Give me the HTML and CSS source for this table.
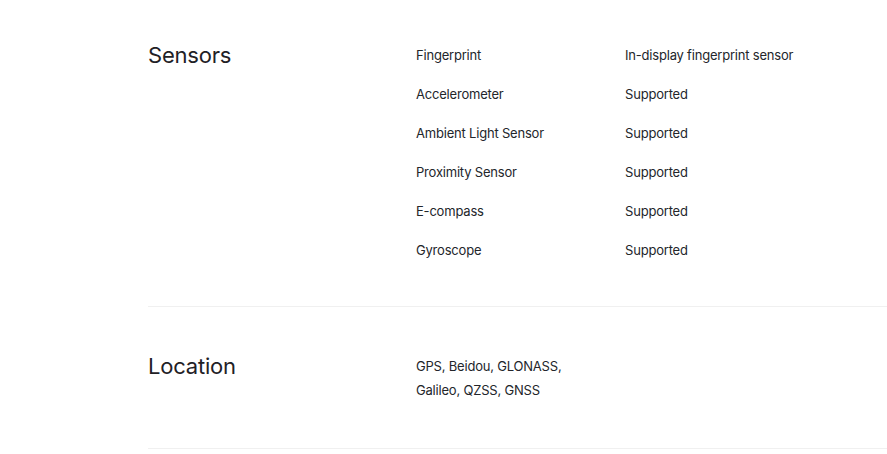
FILE: index.html
```html
<!DOCTYPE html>
<html>
<head>
<meta charset="utf-8">
<link rel="stylesheet" href="styles.css">
</head>
<body>
<div class="page">
  <section class="spec spec-first">
    <h2 class="spec-title">Sensors</h2>
    <div class="spec-rows">
      <div class="row"><div class="label">Fingerprint</div><div class="value">In-display fingerprint sensor</div></div>
      <div class="row"><div class="label">Accelerometer</div><div class="value">Supported</div></div>
      <div class="row"><div class="label">Ambient Light Sensor</div><div class="value">Supported</div></div>
      <div class="row"><div class="label">Proximity Sensor</div><div class="value">Supported</div></div>
      <div class="row"><div class="label">E-compass</div><div class="value">Supported</div></div>
      <div class="row"><div class="label">Gyroscope</div><div class="value">Supported</div></div>
    </div>
  </section>
  <section class="spec">
    <h2 class="spec-title">Location</h2>
    <div class="spec-rows">
      <div class="text">GPS, Beidou, GLONASS,<br>Galileo, QZSS, GNSS</div>
    </div>
  </section>
</div>
</body>
</html>
```
FILE: styles.css
```css
html, body {
  margin: 0;
  padding: 0;
  background: #ffffff;
}
body {
  font-family: Inter, "Noto Sans", sans-serif;
  color: #23262b;
}
.page {
  padding-left: 148px;
}
.spec {
  display: grid;
  grid-template-columns: 268px 1fr;
  padding: 47px 0 46px;
  border-bottom: 1px solid #f0f0f0;
}
.spec-first {
  padding-top: 43px;
  padding-bottom: 44px;
}
.spec-title {
  margin: 0;
  font-size: 22px;
  line-height: 24px;
  font-weight: 400;
  letter-spacing: -0.2px;
  color: #1f2126;
}
.spec-rows {
  display: flex;
  flex-direction: column;
  gap: 15px;
  font-size: 13px;
  line-height: 24px;
  letter-spacing: -0.2px;
}
.row {
  display: grid;
  grid-template-columns: 209px 1fr;
}
.text {
  line-height: 24px;
}
```
